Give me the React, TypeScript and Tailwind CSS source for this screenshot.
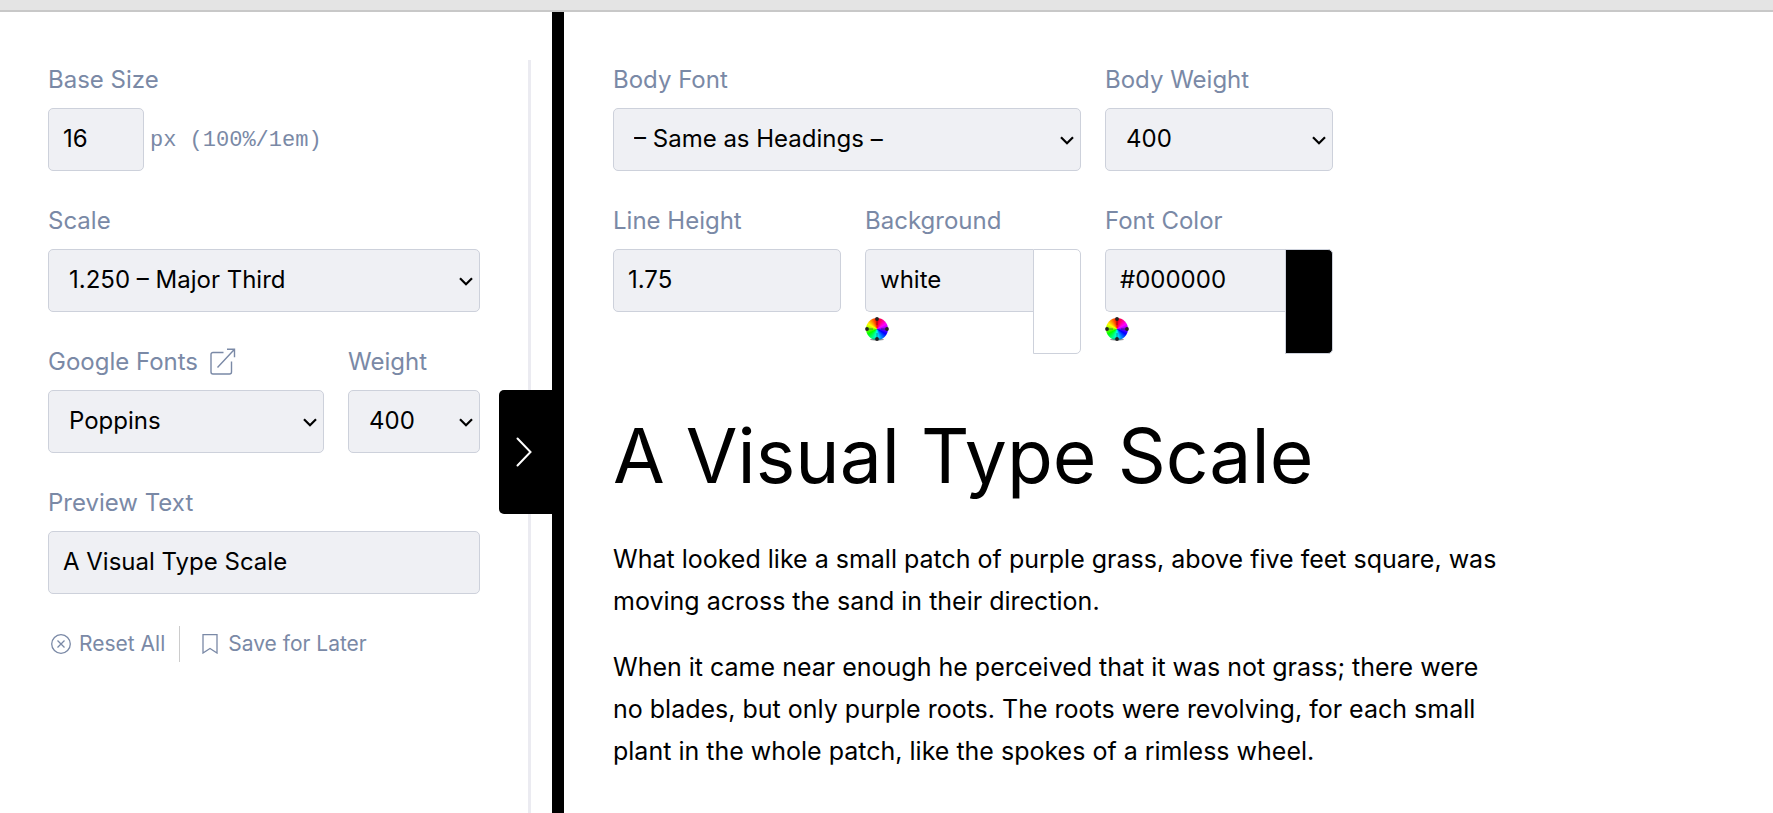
import { useId, useState } from 'react';

const controlClass =
  'h-[63px] w-full rounded-[5px] border border-[#cdd1db] bg-[#eff0f4] text-2xl text-black outline-none';

const Chevron: React.FC = () => (
  <svg viewBox="0 0 14 9" className="pointer-events-none absolute right-[7px] top-7 h-[9px] w-3.5" fill="none">
    <path d="M1 1.2 L7 7.2 L13 1.2" stroke="#000" strokeWidth="2.2" />
  </svg>
);

const ExternalIcon: React.FC = () => (
  <svg viewBox="0 0 26 28" className="h-7 w-[26px]" fill="none" stroke="currentColor" strokeWidth="1.4">
    <path d="M13.500 4.500H3A2 2 0 0 0 1 6.500v17.500a2 2 0 0 0 2 2h16.500a2 2 0 0 0 2-2V13.500M17 1.200h7.500v8M24.500 1.200 7.500 19.500" />
  </svg>
);

const ColorWheel: React.FC = () => (
  <span className="relative block size-6">
    <span className="absolute inset-px rounded-full bg-[conic-gradient(#f00,#f0f,#00f,#0ff,#0f0,#ff0,#f00)]" />
    <svg viewBox="0 0 24 24" className="absolute inset-0" fill="#222">
      <ellipse cx="12" cy="22.500" rx="7" ry="1.200" opacity="0.45" />
      <circle cx="12" cy="2" r="1.900" />
      <circle cx="12" cy="22" r="1.900" />
      <circle cx="2" cy="12" r="1.900" />
      <circle cx="22" cy="12" r="1.900" />
      <path d="M12 3v5M12 16v5M3 12h5M16 12h5" stroke="#222" strokeWidth="1" opacity="0.5" />
    </svg>
  </span>
);

type FieldProps = {
  label: string;
  className?: string;
  children: (id: string) => React.ReactNode;
  icon?: React.ReactNode;
};

const Field: React.FC<FieldProps> = ({ label, className, children, icon }) => {
  const id = useId();
  return (
    <div className={className}>
      <div className="mb-2.5 flex h-9 items-center gap-3 text-2xl">
        <label htmlFor={id}>{label}</label>
        {icon}
      </div>
      {children(id)}
    </div>
  );
};

const SelectField: React.FC<{ label: string; options: string[]; className?: string; icon?: React.ReactNode }> = ({
  label,
  options,
  className,
  icon,
}) => (
  <Field label={label} className={className} icon={icon}>
    {(id) => (
      <div className="relative">
        <select id={id} className={`${controlClass} appearance-none pb-0.5 pl-5 pr-8`}>
          {options.map((option) => (
            <option key={option}>{option}</option>
          ))}
        </select>
        <Chevron />
      </div>
    )}
  </Field>
);

const ColorField: React.FC<{ label: string; initial: string; className?: string }> = ({
  label,
  initial,
  className,
}) => {
  const [color, setColor] = useState(initial);
  return (
    <Field label={label} className={className}>
      {(id) => (
        <div className="flex">
          <div className="min-w-0 flex-1 pb-[13px]">
            <input
              id={id}
              value={color}
              onChange={(e) => setColor(e.target.value)}
              className={`${controlClass} rounded-r-none border-r-0 px-3.5 pb-0.5`}
            />
            <button aria-label={`Pick ${label}`} className="mt-[5px] block">
              <ColorWheel />
            </button>
          </div>
          <div className="w-12 rounded-r-[5px] border border-[#cdd1db]" style={{ backgroundColor: color }} />
        </div>
      )}
    </Field>
  );
};

export default function App() {
  const [text, setText] = useState('A Visual Type Scale');

  return (
    <div className="flex h-screen flex-col overflow-hidden bg-white font-['Inter',sans-serif] text-[#7a89a6]">
      <div className="h-3 shrink-0 border-b-2 border-[#c8c8c8] bg-[#e4e4e4]" />
      <div className="flex min-h-0 flex-1">
        <aside className="relative flex w-[552px] shrink-0 pl-12 pr-[21px] pt-12">
          <form className="mr-12 flex flex-1 flex-col gap-8 pt-0.5">
            <Field label="Base Size">
              {(id) => (
                <div className="flex items-center gap-1.5">
                  <input id={id} defaultValue="16" className={`${controlClass} max-w-24 px-3.5 pb-0.5`} />
                  <span className="pt-0.5 font-['Liberation_Mono',monospace] text-[22px]">px (100%/1em)</span>
                </div>
              )}
            </Field>
            <SelectField label="Scale" options={['1.250 – Major Third', '1.333 – Perfect Fourth']} />
            <div className="flex gap-6">
              <SelectField
                label="Google Fonts"
                options={['Poppins', 'Inter']}
                className="flex-1"
                icon={
                  <a href="#fonts" aria-label="Browse Google Fonts">
                    <ExternalIcon />
                  </a>
                }
              />
              <SelectField label="Weight" options={['400', '700']} className="w-[132px]" />
            </div>
            <Field label="Preview Text">
              {(id) => (
                <input
                  id={id}
                  value={text}
                  onChange={(e) => setText(e.target.value)}
                  className={`${controlClass} px-3.5 pb-0.5`}
                />
              )}
            </Field>
            <div className="flex h-9 items-center text-[21px]">
              <button type="button" className="flex h-full items-center gap-2 border-r border-[#cccccc] pl-[3px] pr-3.5">
                <svg viewBox="0 0 20 20" className="size-5" fill="none" stroke="currentColor" strokeWidth="1.3">
                  <circle cx="10" cy="10" r="9.300" />
                  <path d="m6.500 6.500 7 7m0-7-7 7" />
                </svg>
                Reset All
              </button>
              <button type="button" className="flex items-center gap-2.5 pl-[22px]">
                <svg viewBox="0 0 16 20" className="h-5 w-4" fill="none" stroke="currentColor" strokeWidth="1.3">
                  <path d="M1 .7h14v18.300l-7-4.500-7 4.500z" />
                </svg>
                Save for Later
              </button>
            </div>
          </form>
          <div className="w-[3px] bg-[#ebebf1]" />
          <button
            aria-label="Toggle panel"
            className="absolute right-0 top-[378px] flex h-[124px] w-[53px] items-center rounded-l-[5px] bg-black pl-[17px]"
          >
            <svg viewBox="0 0 16 30" className="h-[30px] w-4" fill="none" stroke="#fff" strokeWidth="2">
              <path d="m1.500 1.500 13 13.500-13 13.500" strokeLinecap="round" />
            </svg>
          </button>
        </aside>
        <div className="w-3 shrink-0 bg-black" />
        <main className="min-w-0 flex-1 pl-[49px] pt-[50px]">
          <div className="grid max-w-[720px] grid-cols-[228fr_216fr_228fr] gap-x-6 gap-y-8">
            <SelectField label="Body Font" options={['– Same as Headings –']} className="col-span-2" />
            <SelectField label="Body Weight" options={['400', '700']} />
            <Field label="Line Height">
              {(id) => <input id={id} defaultValue="1.75" className={`${controlClass} px-3.5 pb-0.5`} />}
            </Field>
            <ColorField label="Background" initial="white" />
            <ColorField label="Font Color" initial="#000000" />
          </div>
          <article className="text-black">
            <h1 className="mt-[60px] text-[75px] leading-[84px]">{text}</h1>
            <div className="mt-10 space-y-6 text-[25px] leading-[42px]">
              <p>
                What looked like a small patch of purple grass, above five feet square, was
                <br />
                moving across the sand in their direction.
              </p>
              <p>
                When it came near enough he perceived that it was not grass; there were
                <br />
                no blades, but only purple roots. The roots were revolving, for each small
                <br />
                plant in the whole patch, like the spokes of a rimless wheel.
              </p>
            </div>
          </article>
        </main>
      </div>
    </div>
  );
}
